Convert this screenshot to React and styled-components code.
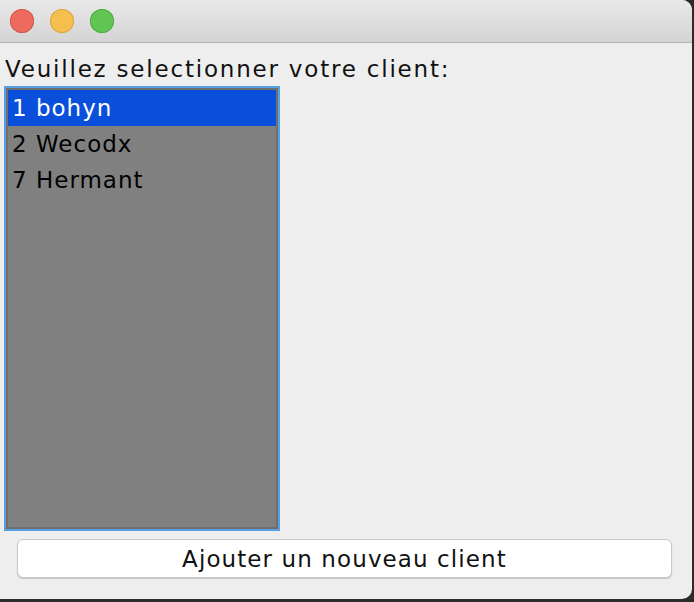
import React from "react";
import styled, { createGlobalStyle } from "styled-components";

const clients = [
    { id: 1, name: "bohyn" },
    { id: 2, name: "Wecodx" },
    { id: 7, name: "Hermant" },
];

const App = () => {
    return (
        <>
            <GlobalStyle />
            <Window>
                <TitleBar>
                    <Light color="#ed6a5e" border="#d05a4f" />
                    <Light color="#f5bf4f" border="#d9a63e" />
                    <Light color="#61c554" border="#52a844" />
                </TitleBar>
                <Content>
                    <Label>Veuillez selectionner votre client:</Label>
                    <ListBox>
                        {clients.map((c, index) => (
                            <Row key={c.id} selected={index === 0}>
                                {c.id} {c.name}
                            </Row>
                        ))}
                    </ListBox>
                    <ButtonBar>
                        <Button>Ajouter un nouveau client</Button>
                    </ButtonBar>
                </Content>
            </Window>
        </>
    );
};

export default App;

const GlobalStyle = createGlobalStyle`
    html, body {
        margin: 0;
        padding: 0;
        background: #2b2b2b;
        width: 694px;
        height: 602px;
        overflow: hidden;
    }
`;

const Window = styled.div`
    width: 692px;
    height: 599px;
    background: #eeeeee;
    border-radius: 0 10px 10px 0;
    overflow: hidden;
    display: flex;
    flex-direction: column;
    font-family: "DejaVu Sans", "Liberation Sans", sans-serif;
`;

const TitleBar = styled.div`
    height: 43px;
    flex-shrink: 0;
    background: linear-gradient(#e9e9e9, #d4d4d4);
    border-bottom: 1px solid #b4b4b4;
    display: flex;
    align-items: center;
    gap: 16px;
    padding-left: 10px;
    box-sizing: border-box;
`;

const Light = styled.span`
    width: 24px;
    height: 24px;
    border-radius: 50%;
    background: ${(p) => p.color};
    box-shadow: inset 0 0 0 1px ${(p) => p.border};
`;

const Content = styled.div`
    flex: 1;
    display: flex;
    flex-direction: column;
    padding: 0 0 0 4px;
`;

const Label = styled.div`
    font-size: 23px;
    letter-spacing: 1.8px;
    color: #111;
    height: 43px;
    line-height: 26px;
    padding: 13px 0 0 1px;
    box-sizing: border-box;
    white-space: nowrap;
`;

const ListBox = styled.div`
    width: 276px;
    height: 445px;
    box-sizing: border-box;
    border: 2px solid #58a0e6;
    box-shadow: inset 0 0 0 2px #6f6f6f;
    background: #808080;
    padding: 2px;
    display: flex;
    flex-direction: column;
`;

const Row = styled.div`
    height: 36px;
    line-height: 37px;
    font-size: 23px;
    letter-spacing: 1px;
    padding-left: 4px;
    color: ${(p) => (p.selected ? "#ffffff" : "#000000")};
    background: ${(p) => (p.selected ? "#0a4fdc" : "transparent")};
`;

const ButtonBar = styled.div`
    padding: 8px 20px 0 13px;
`;

const Button = styled.button`
    width: 100%;
    height: 39px;
    background: #ffffff;
    border: 1px solid #c8c8c8;
    border-radius: 6px;
    box-shadow: 0 1px 1px rgba(0, 0, 0, 0.18);
    font-family: "DejaVu Sans", "Liberation Sans", sans-serif;
    font-size: 23px;
    letter-spacing: 1.1px;
    color: #111;
    padding: 0;
`;
